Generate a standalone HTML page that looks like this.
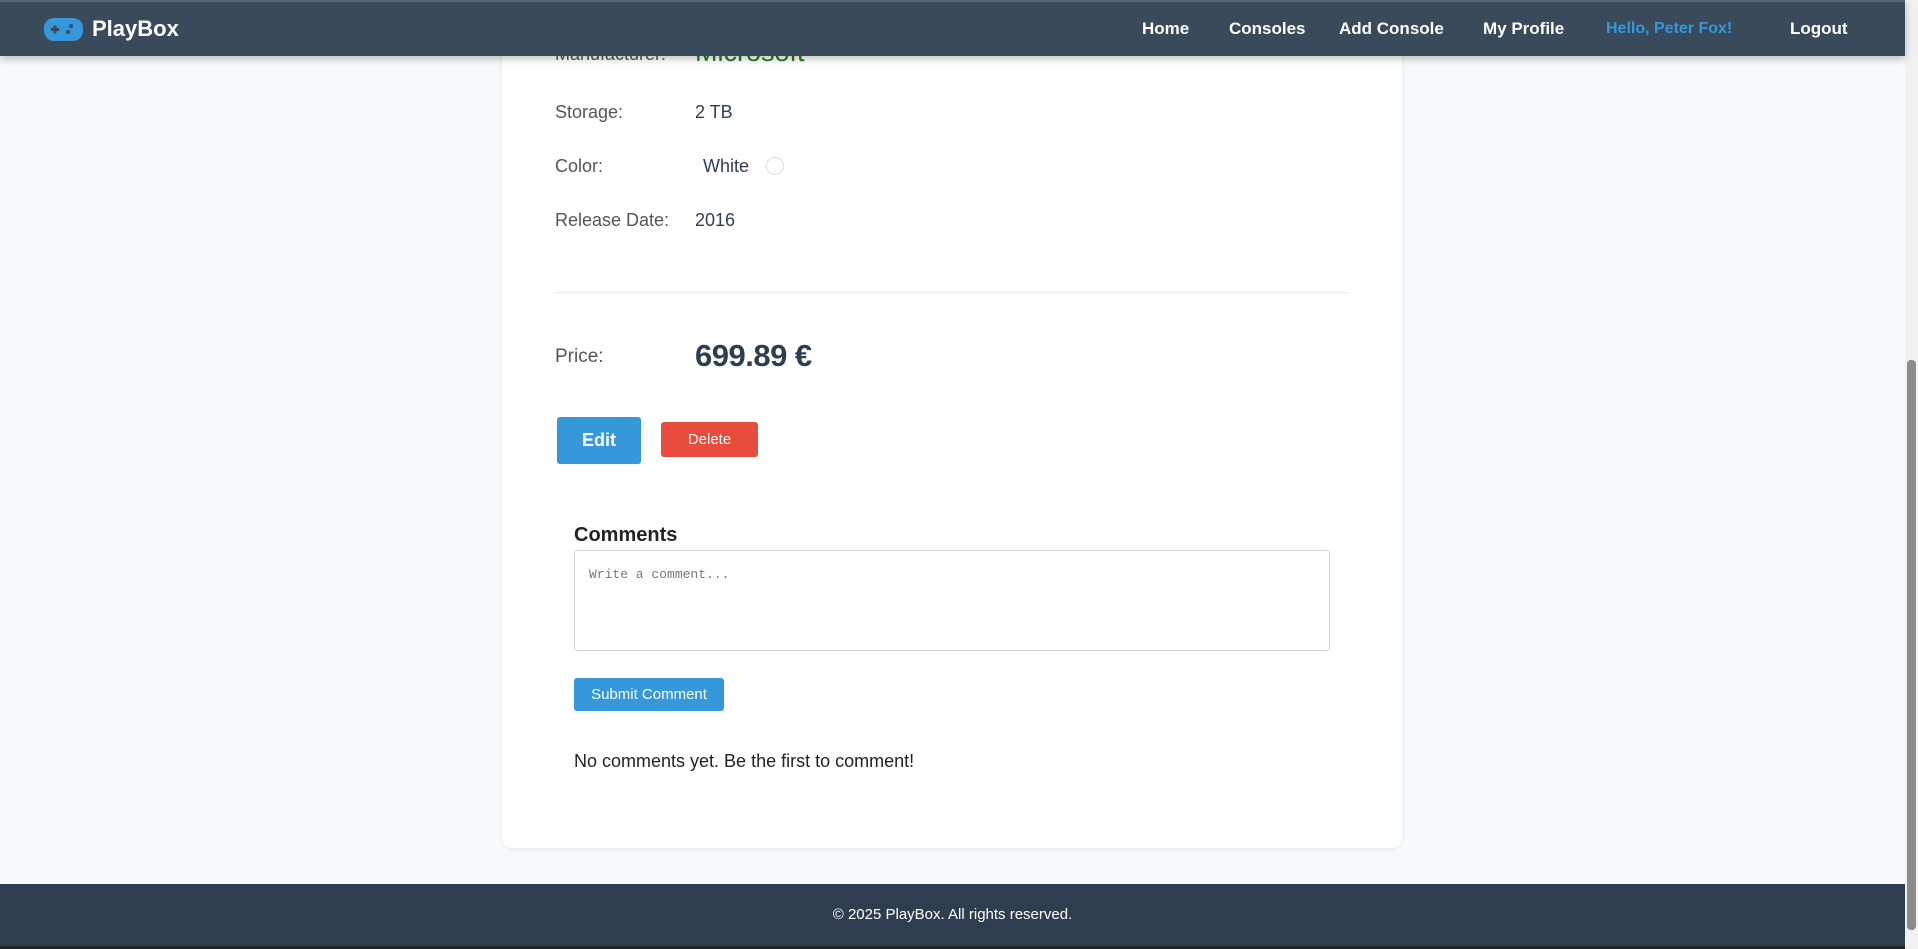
<!DOCTYPE html>
<html><head><meta charset="utf-8"><style>
*{box-sizing:border-box;margin:0;padding:0}
html,body{width:1918px;height:949px;overflow:hidden}
body{background:#f8f9fa;font-family:"Liberation Sans",sans-serif;position:relative;color:#2c3e50}
.nav{position:absolute;left:0;top:0;width:1905px;height:56px;background:#394a5a;border-top:2px solid #5a6670;box-shadow:0 3px 8px rgba(0,0,0,.25);z-index:5}
.logo{position:absolute;left:44px;top:14px;display:flex;align-items:center;color:#fff;font-weight:bold;font-size:22px}
.nav a{position:absolute;top:17px;color:#fff;font-weight:bold;font-size:17px;text-decoration:none;white-space:nowrap}
.card{position:absolute;left:502px;top:20px;width:900px;height:828px;background:#fff;border-radius:10px;box-shadow:0 1px 4px rgba(0,0,0,.08)}
.lbl{position:absolute;left:53px;font-size:18px;color:#555}
.val{position:absolute;left:193px;font-size:18px;color:#2c3e50}
.hr{position:absolute;left:53px;top:272px;width:793px;height:1px;background:#e6e6e6}
.btn{position:absolute;color:#fff;border-radius:3px;display:flex;align-items:center;justify-content:center}
.scroll{position:absolute;right:0;top:0;width:13px;height:949px;background:#f1f1f1}
.thumb{position:absolute;right:2px;top:360px;width:9px;height:570px;background:#8b8b8b;border-radius:4px}
.footer{position:absolute;left:0;top:884px;width:1905px;height:62px;background:#2e3e50;color:#fff;font-size:15px;text-align:center;line-height:62px}
</style></head><body>
<div class="nav">
<div class="logo"><svg width="39" height="23" viewBox="0 0 39 23"><rect x="0" y="0" width="39" height="23" rx="10" fill="#3498db"/><rect x="7" y="10" width="8" height="3" fill="#394a5a"/><rect x="9.5" y="7.5" width="3" height="8" fill="#394a5a"/><circle cx="27" cy="8" r="2" fill="#394a5a"/><circle cx="24" cy="14" r="2" fill="#394a5a"/></svg><span style="margin-left:9px">PlayBox</span></div>
<a style="left:1142px">Home</a>
<a style="left:1229px">Consoles</a>
<a style="left:1339px">Add Console</a>
<a style="left:1483px">My Profile</a>
<a style="left:1606px;color:#3498db;font-size:16px;top:18px">Hello, Peter Fox!</a>
<a style="left:1790px">Logout</a>
</div>
<div class="card">
<div class="lbl" style="top:24px">Manufacturer:</div><div class="val" style="top:17px;font-size:27px;color:#1e7d1e">Microsoft</div>
<div class="lbl" style="top:82px">Storage:</div><div class="val" style="top:82px">2 TB</div>
<div class="lbl" style="top:136px">Color:</div><div class="val" style="top:136px;left:201px">White <span style="display:inline-block;width:18px;height:18px;border:1px solid #ddd;border-radius:50%;vertical-align:-3px;margin-left:12px"></span></div>
<div class="lbl" style="top:190px">Release Date:</div><div class="val" style="top:190px">2016</div>
<div class="hr"></div>
<div class="lbl" style="top:326px;font-size:19px">Price:</div><div class="val" style="top:318px;font-size:31px;font-weight:bold;letter-spacing:-0.5px">699.89 €</div>
<div class="btn" style="left:55px;top:397px;width:84px;height:47px;background:#3498db;font-size:18px;font-weight:bold">Edit</div>
<div class="btn" style="left:159px;top:402px;width:97px;height:35px;background:#e74c3c;font-size:15px">Delete</div>
<div style="position:absolute;left:72px;top:504px;font-size:20px;font-weight:bold;color:#222">Comments</div>
<div style="position:absolute;left:72px;top:530px;width:756px;height:101px;border:1px solid #d5d5d5;border-radius:4px;font-family:'Liberation Mono',monospace;font-size:13px;color:#777;padding:16px 14px">Write a comment...</div>
<div class="btn" style="left:72px;top:658px;width:150px;height:33px;background:#3498db;font-size:15px">Submit Comment</div>
<div style="position:absolute;left:72px;top:731px;font-size:18px;color:#222">No comments yet. Be the first to comment!</div>
</div>
<div class="footer">© 2025 PlayBox. All rights reserved.</div>
<div style="position:absolute;left:0;top:946px;width:1918px;height:3px;background:#222"></div>
<div class="scroll"><div class="thumb"></div></div>
</body></html>
